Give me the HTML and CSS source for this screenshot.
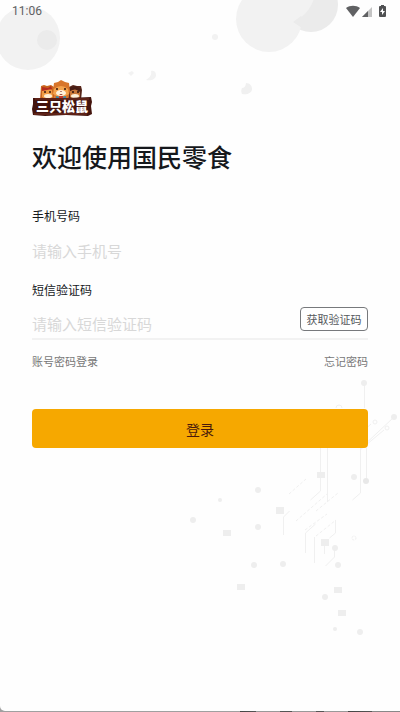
FILE: index.html
```html
<!DOCTYPE html>
<html lang="zh-CN">
<head>
  <meta charset="UTF-8">
  <meta name="viewport" content="width=device-width, initial-scale=1.0">
  <title>登录 - 国民零食</title>
  <link rel="stylesheet" href="styles.css">
</head>
<body>
  <div class="page">
    <svg class="bg-bubbles-left" width="160" height="90" viewBox="0 0 160 90" aria-hidden="true">
      <circle cx="28" cy="38" r="32" fill="#f2f2f2"/>
      <circle cx="47" cy="40" r="10" fill="#ebebeb"/>
      <path d="M128 73l4-2 2 2-3 3z" fill="#f2f2f2"/>
      <path d="M151 71c3-1 5 1 5 4 0 4-4 6-10 5 4-3 6-5 5-9z" fill="#f2f2f2"/>
    </svg>
    <svg class="bg-bubbles-right" width="200" height="100" viewBox="0 0 200 100" aria-hidden="true">
      <circle cx="111" cy="5" r="27" fill="#ebebeb"/>
      <path d="M80-2h34c-2 8-8 18-20 24l-10-2z" fill="#f2f2f2"/>
      <circle cx="69" cy="19" r="33" fill="#f2f2f2"/>
      <path d="M93 22l9 6c2-6 1-10-1-12z" fill="#ebebeb"/>
      <circle cx="15" cy="37" r="3" fill="#f2f2f2"/>
      <path d="M46 83c4 0 6 3 6 6 0 4-5 6-10 5-1-2-1-4 0-6 2 0 4-2 4-5z" fill="#f0f0f0"/>
    </svg>
    <svg class="bg-circuit" width="250" height="270" viewBox="150 375 250 270" aria-hidden="true">
      <g fill="none" stroke="#f0f0f0">
        <path d="M364.500 384v24M360.500 448v45l-8 7M366.500 448v32M320.500 448v43l-10 9M327.500 448v54M336 408a3 3 0 0 1 6 0"/>
        <path d="M393 418l-32 30M384 430l-24 20M371 424l-10 9"/>
        <circle cx="375" cy="422" r="2"/>
        <circle cx="387" cy="428" r="2"/>
        <path d="M283.500 535v-18l6-6M305.500 553v-20l10-9M314.500 563v-26M335.500 520v13l-6 5M324.500 546v8M334.500 550v7l-9 9"/>
        <path d="M289 494l17-15M296 521l31-27M316 511l22-18M305 530l22-16M316 536l20-16" stroke-dasharray="3 2"/>
        <circle cx="354" cy="538" r="2" stroke-dasharray="2 1"/>
      </g>
      <g fill="#eee">
        <circle cx="364" cy="383" r="3"/>
        <circle cx="394" cy="417" r="3"/>
        <circle cx="354" cy="477" r="3"/>
        <circle cx="366" cy="481" r="3" fill="#e8e8e8"/>
        <circle cx="258" cy="490" r="3"/>
        <circle cx="220" cy="500" r="2"/>
        <circle cx="193" cy="520" r="3"/>
        <circle cx="258" cy="527" r="3"/>
        <circle cx="254" cy="565" r="3"/>
        <circle cx="283" cy="564" r="3"/>
        <circle cx="335" cy="548" r="3"/>
        <circle cx="338" cy="565" r="3"/>
        <circle cx="325" cy="597" r="3"/>
        <circle cx="335" cy="629" r="2"/>
        <circle cx="360" cy="632" r="3"/>
        <path d="M317 472h8v6h-8zM276 507h8v7h-8zM223 530h8v6h-8zM321 539h8v7h-8zM237 584h8v6h-8zM334 587h8v6h-8zM338 610h8v6h-8z"/>
      </g>
    </svg>

    <div class="status-bar">
      <span>11:06</span>
      <svg width="42" height="14" viewBox="0 0 42 14" role="img" aria-label="Wi-Fi、信号、电池">
        <path d="M0 4C4 1 10 1 14 4L7 13z" fill="#606163"/>
        <path d="M16 13L26 3v10z" fill="#c4c4c4"/>
        <path d="M16 13l6-6v6z" fill="#606163"/>
        <path d="M33 3q0-1 1-1h1V1h3v1h1q1 0 1 1v9q0 1-1 1h-5q-1 0-1-1z" fill="#505153"/>
        <path d="M37 4l-3 4h2v3l3-4h-2z" fill="#fff"/>
      </svg>
    </div>

    <main class="login">
      <svg class="logo" width="60" height="38" viewBox="0 0 60 38" role="img" aria-label="三只松鼠">
        <!-- left squirrel -->
        <path d="M8 20L9 6l3-1 3 1 4-1 3 2 1 13z" fill="#c9641c"/>
        <path d="M10 10q4-3 10 0l1 7q-6 4-11 0z" fill="#ef9c45"/>
        <path d="M10 7l6 1 3-2 1 3-10 2z" fill="#b52b1d"/>
        <ellipse cx="16" cy="16" rx="4" ry="2" fill="#fff0d8"/>
        <circle cx="13" cy="12" r="1" fill="#3a1710"/>
        <circle cx="18" cy="12" r="1" fill="#3a1710"/>
        <!-- right squirrel -->
        <path d="M36 20l1-13 4-2 4 1 4 0 1 4-1 10z" fill="#57261a"/>
        <path d="M38 11q5-3 10 0v6q-5 4-10 0z" fill="#c97737"/>
        <path d="M37 8l6-2 6 3-1 3-5-3-6 2z" fill="#471d15"/>
        <ellipse cx="43" cy="16" rx="4" ry="2" fill="#fff0d8"/>
        <circle cx="41" cy="12" r="1" fill="#2b110d"/>
        <circle cx="46" cy="12" r="1" fill="#2b110d"/>
        <!-- middle squirrel -->
        <path d="M21 10l1-7 4-1 3-2 4 2 4 1 1 8-2 8H23z" fill="#d8752a"/>
        <path d="M22 9q7-6 14 0l1 5q-8 6-16 0z" fill="#f4a44e"/>
        <ellipse cx="29" cy="13" rx="5" ry="3" fill="#fff2dc"/>
        <circle cx="25" cy="9" r="1" fill="#35150f"/>
        <circle cx="33" cy="9" r="1" fill="#35150f"/>
        <path d="M28 11h2l-1 1zM27 14h4l-2 1z" fill="#7a1d14"/>
        <path d="M24 16l5 1 5-1v3H24z" fill="#3c86a6"/>
        <path d="M27 16h4v3h-4z" fill="#c7382b"/>
        <!-- wooden board -->
        <path d="M1 18l21 0 14 0 23-1 1 5-1 4 1 8-4 2-22-1-21 1-12-1-1-6 1-5z" fill="#43140d"/>
        <path d="M3 19h54M2 34h53" stroke="#7b3123" fill="none"/>
        <text x="30" y="31" class="logo-text">三只松鼠</text>
      </svg>

      <h1>欢迎使用国民零食</h1>

      <form class="login-form">
        <label for="phone">手机号码</label>
        <div class="field">
          <input type="tel" id="phone" placeholder="请输入手机号">
        </div>

        <label for="code">短信验证码</label>
        <div class="field field-line">
          <input type="text" id="code" placeholder="请输入短信验证码">
          <button type="button" class="btn-code">获取验证码</button>
        </div>

        <div class="links">
          <a href="#">账号密码登录</a>
          <a href="#">忘记密码</a>
        </div>

        <button type="submit" class="btn-login">登录</button>
      </form>
    </main>
  </div>
</body>
</html>
```
FILE: styles.css
```css
* {
  box-sizing: border-box;
}

body {
  margin: 0;
  font-family: "Noto Sans CJK SC", sans-serif;
  color: #15181c;
  background: linear-gradient(to right, #a0a0a0 60%, #444 60%, #555 64%, #999 64%, #999 70%, #555 70%, #555 73%, #999 73%, #999 79%, #555 79%, #555 81%, #999 81%, #999 87%, #444 87%, #555 93%, #888 93%);
}

.page {
  position: relative;
  min-height: calc(100vh - 1px);
  background: #fefefe;
  border-bottom-left-radius: 5px;
  overflow: hidden;
}

/* Background decoration */
.bg-bubbles-left,
.bg-bubbles-right,
.bg-circuit {
  position: absolute;
  top: 0;
}

.bg-bubbles-left {
  left: 0;
}

.bg-bubbles-right {
  right: 0;
}

.bg-circuit {
  top: 375px;
  right: 0;
}

.status-bar {
  position: relative;
  display: flex;
  justify-content: space-between;
  align-items: center;
  height: 22px;
  padding: 0 12px;
  font-family: Roboto, sans-serif;
  font-size: 12px;
  color: #606163;
}

/* Login */
.login {
  position: relative;
  padding: 58px 32px 32px;
}

.logo {
  display: block;
}

.logo-text {
  font-size: 13px;
  font-weight: 900;
  text-anchor: middle;
  fill: #fff;
}

h1 {
  margin: 20px 0 32px;
  font-size: 25px;
  font-weight: 500;
  line-height: 36px;
}

.login-form label {
  display: block;
  font-size: 12px;
  line-height: 20px;
}

.field {
  display: flex;
  align-items: center;
  height: 32px;
  margin: 8px 0 14px;
}

.field input {
  flex: 1;
  min-width: 0;
  padding: 0;
  border: none;
  outline: none;
  background: transparent;
  font-family: inherit;
  font-size: 15px;
  color: #15181c;
}

.field input::placeholder {
  color: #d8d8d8;
}

.field-line {
  margin-bottom: 11px;
  border-bottom: 2px solid #f2f2f2;
}

.btn-code {
  height: 24px;
  width: 68px;
  margin-bottom: 8px;
  padding: 0;
  border: 1px solid #77797c;
  border-radius: 4px;
  background: #fff;
  font-family: inherit;
  font-size: 11px;
  line-height: 20px;
  color: #55585c;
}

.links {
  display: flex;
  justify-content: space-between;
  font-size: 11px;
  line-height: 20px;
}

.links a {
  color: #777;
  text-decoration: none;
}

.btn-login {
  display: block;
  width: 100%;
  height: 39px;
  margin-top: 38px;
  border: none;
  border-radius: 4px;
  background: #f6a800;
  font-family: inherit;
  font-size: 14px;
  color: #4a1a0c;
}
```
